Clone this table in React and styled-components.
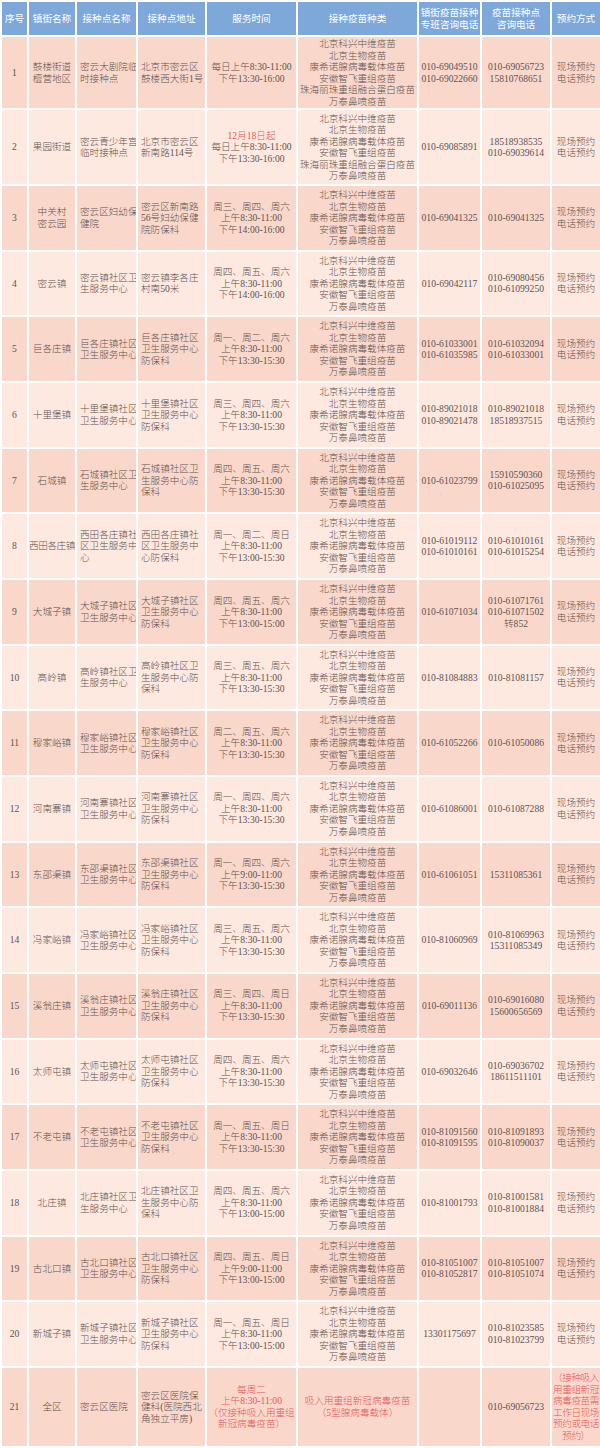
import React from 'react';
import styled, { createGlobalStyle } from 'styled-components';

const GlobalStyle = createGlobalStyle`
  html, body {
    margin: 0;
    padding: 0;
    background: #ffffff;
  }
  body {
    font-family: "Liberation Serif", "Noto Sans CJK SC", serif;
  }
`;

const Table = styled.table`
  width: 600px;
  table-layout: fixed;
  border-collapse: collapse;
  font-size: 9.6px;
  line-height: 11.5px;
  color: #5f5350;
`;

const HeadRow = styled.tr`
  height: 35px;
  background: #7ea8da;
`;

const HeadCell = styled.th`
  border: 2px solid #ffffff;
  padding: 0;
  color: #ffffff;
  font-weight: 400;
  text-align: center;
  vertical-align: middle;
`;

const Row = styled.tr`
  height: ${(props) => props.$h}px;
  background: ${(props) => (props.$odd ? '#f9d8cb' : '#fde9e0')};
`;

const Cell = styled.td`
  border: 2px solid #ffffff;
  padding: ${(props) => (props.$align === 'left' ? '1px 0 1px 3px' : '1px 0')};
  text-align: ${(props) => props.$align || 'center'};
  vertical-align: middle;
  font-weight: 300;
  white-space: nowrap;
  overflow: hidden;
  letter-spacing: ${(props) => (props.$tight ? '-0.4px' : 'normal')};
`;

const Line = styled.span`
  display: block;
  color: ${(props) => (props.$red ? '#e2585c' : 'inherit')};
`;

const widths = [27, 48, 61, 69, 91, 121, 63, 70, 50];

const heads = [
  ['序号'],
  ['镇街名称'],
  ['接种点名称'],
  ['接种点地址'],
  ['服务时间'],
  ['接种疫苗种类'],
  ['镇街疫苗接种', '专班咨询电话'],
  ['疫苗接种点', '咨询电话'],
  ['预约方式'],
];

const vac5 = ['北京科兴中维疫苗', '北京生物疫苗', '康希诺腺病毒载体疫苗', '安徽智飞重组疫苗', '万泰鼻喷疫苗'];
const vac6 = ['北京科兴中维疫苗', '北京生物疫苗', '康希诺腺病毒载体疫苗', '安徽智飞重组疫苗', '珠海丽珠重组融合蛋白疫苗', '万泰鼻喷疫苗'];
const book = ['现场预约', '电话预约'];
const red = (text) => ({ text, red: true });

const ctr = (name) => [name + '社区', '卫生服务中心'];
const ctrFull = (name) => [name + '社区', '卫生服务中心', '防保科'];
const ctr3 = (name) => [name + '社区卫', '生服务中心'];
const ctr3Full = (name) => [name + '社区卫', '生服务中心防', '保科'];
const time = (days, am, pm) => [days, '上午' + am, '下午' + pm];

const rows = [
  {
    town: ['鼓楼街道', '檀营地区'], site: ['密云大剧院临', '时接种点'], addr: ['北京市密云区', '鼓楼西大街1号'],
    time: ['每日上午8:30-11:00', '下午13:30-16:00'], vac: vac6,
    tel1: ['010-69049510', '010-69022660'], tel2: ['010-69056723', '15810768651'], book, h: 72,
  },
  {
    town: ['果园街道'], site: ['密云青少年宫', '临时接种点'], addr: ['北京市密云区', '新南路114号'],
    time: [red('12月18日起'), '每日上午8:30-11:00', '下午13:30-16:00'], vac: vac6,
    tel1: ['010-69085891'], tel2: ['18518938535', '010-69039614'], book, h: 76,
  },
  {
    town: ['中关村', '密云园'], site: ['密云区妇幼保', '健院'], addr: ['密云区新南路', '56号妇幼保健', '院防保科'],
    time: time('周三、周四、周六', '8:30-11:00', '14:00-16:00'), vac: vac5,
    tel1: ['010-69041325'], tel2: ['010-69041325'], book,
  },
  {
    town: ['密云镇'], site: ctr3('密云镇'), addr: ['密云镇李各庄', '村南50米'],
    time: time('周四、周五、周六', '8:30-11:00', '14:00-16:00'), vac: vac5,
    tel1: ['010-69042117'], tel2: ['010-69080456', '010-61099250'], book,
  },
  {
    town: ['巨各庄镇'], site: ctr('巨各庄镇'), addr: ctrFull('巨各庄镇'),
    time: time('周一、周二、周六', '8:30-11:00', '13:30-15:30'), vac: vac5,
    tel1: ['010-61033001', '010-61035985'], tel2: ['010-61032094', '010-61033001'], book,
  },
  {
    town: ['十里堡镇'], site: ctr('十里堡镇'), addr: ctrFull('十里堡镇'),
    time: time('周三、周四、周六', '8:30-11:00', '13:30-15:30'), vac: vac5,
    tel1: ['010-89021018', '010-89021478'], tel2: ['010-89021018', '18518937515'], book,
  },
  {
    town: ['石城镇'], site: ctr3('石城镇'), addr: ctr3Full('石城镇'),
    time: time('周四、周五、周六', '8:30-11:00', '13:30-15:30'), vac: vac5,
    tel1: ['010-61023799'], tel2: ['15910590360', '010-61025095'], book,
  },
  {
    town: ['西田各庄镇'], site: ['西田各庄镇社', '区卫生服务中', '心'], addr: ['西田各庄镇社', '区卫生服务中', '心防保科'],
    time: time('周一、周二、周日', '8:30-11:00', '13:00-15:30'), vac: vac5,
    tel1: ['010-61019112', '010-61010161'], tel2: ['010-61010161', '010-61015254'], book,
  },
  {
    town: ['大城子镇'], site: ctr('大城子镇'), addr: ctrFull('大城子镇'),
    time: time('周四、周五、周六', '8:30-11:00', '13:00-15:00'), vac: vac5,
    tel1: ['010-61071034'], tel2: ['010-61071761', '010-61071502', '转852'], book,
  },
  {
    town: ['高岭镇'], site: ctr3('高岭镇'), addr: ctr3Full('高岭镇'),
    time: time('周三、周五、周六', '8:30-11:00', '13:30-15:30'), vac: vac5,
    tel1: ['010-81084883'], tel2: ['010-81081157'], book,
  },
  {
    town: ['穆家峪镇'], site: ctr('穆家峪镇'), addr: ctrFull('穆家峪镇'),
    time: time('周二、周五、周六', '8:30-11:00', '13:30-15:30'), vac: vac5,
    tel1: ['010-61052266'], tel2: ['010-61050086'], book,
  },
  {
    town: ['河南寨镇'], site: ctr('河南寨镇'), addr: ctrFull('河南寨镇'),
    time: time('周一、周四、周六', '8:30-11:00', '13:30-15:30'), vac: vac5,
    tel1: ['010-61086001'], tel2: ['010-61087288'], book,
  },
  {
    town: ['东邵渠镇'], site: ctr('东邵渠镇'), addr: ctrFull('东邵渠镇'),
    time: time('周一、周四、周六', '9:00-11:00', '13:30-15:30'), vac: vac5,
    tel1: ['010-61061051'], tel2: ['15311085361'], book,
  },
  {
    town: ['冯家峪镇'], site: ctr('冯家峪镇'), addr: ctrFull('冯家峪镇'),
    time: time('周三、周五、周六', '8:30-11:00', '13:30-15:30'), vac: vac5,
    tel1: ['010-81060969'], tel2: ['010-81069963', '15311085349'], book,
  },
  {
    town: ['溪翁庄镇'], site: ctr('溪翁庄镇'), addr: ctrFull('溪翁庄镇'),
    time: time('周三、周四、周日', '8:30-11:00', '13:30-15:30'), vac: vac5,
    tel1: ['010-69011136'], tel2: ['010-69016080', '15600656569'], book,
  },
  {
    town: ['太师屯镇'], site: ctr('太师屯镇'), addr: ctrFull('太师屯镇'),
    time: time('周四、周五、周六', '8:30-11:00', '13:30-15:30'), vac: vac5,
    tel1: ['010-69032646'], tel2: ['010-69036702', '18611511101'], book,
  },
  {
    town: ['不老屯镇'], site: ctr('不老屯镇'), addr: ctrFull('不老屯镇'),
    time: time('周一、周五、周日', '8:30-11:00', '13:30-15:30'), vac: vac5,
    tel1: ['010-81091560', '010-81091595'], tel2: ['010-81091893', '010-81090037'], book,
  },
  {
    town: ['北庄镇'], site: ctr3('北庄镇'), addr: ctr3Full('北庄镇'),
    time: time('周四、周五、周六', '8:30-11:00', '13:00-15:00'), vac: vac5,
    tel1: ['010-81001793'], tel2: ['010-81001581', '010-81001884'], book,
  },
  {
    town: ['古北口镇'], site: ctr('古北口镇'), addr: ctrFull('古北口镇'),
    time: time('周四、周五、周日', '9:00-11:00', '13:00-15:00'), vac: vac5,
    tel1: ['010-81051007', '010-81052817'], tel2: ['010-81051007', '010-81051074'], book,
  },
  {
    town: ['新城子镇'], site: ctr('新城子镇'), addr: ctrFull('新城子镇'),
    time: time('周一、周五、周日', '8:30-11:00', '13:00-15:00'), vac: vac5,
    tel1: ['13301175697'], tel2: ['010-81023585', '010-81023799'], book,
  },
  {
    town: ['全区'], site: ['密云区医院'], addr: ['密云区医院保', '健科(医院西北', '角独立平房)'],
    time: [red('每周二'), red('上午8:30-11:00'), red('（仅接种吸入用重组'), red('新冠病毒疫苗）')],
    vac: [red('吸入用重组新冠病毒疫苗'), red('（5型腺病毒载体）')],
    tel1: [], tel2: ['010-69056723'],
    book: ['（接种吸入', '用重组新冠', '病毒疫苗需', '工作日现场', '预约或电话', '预约）'].map(red), h: 80,
  },
];

const Lines = ({ items }) =>
  items.map((item, i) =>
    typeof item === 'string' ? (
      <Line key={i}>{item}</Line>
    ) : (
      <Line key={i} $red={item.red}>{item.text}</Line>
    )
  );

const longest = (items) =>
  Math.max(0, ...items.map((it) => (typeof it === 'string' ? it : it.text).length));

export default function App() {
  return (
    <>
      <GlobalStyle />
      <Table>
        <colgroup>
          {widths.map((w, i) => (
            <col key={i} style={{ width: w }} />
          ))}
        </colgroup>
        <thead>
          <HeadRow>
            {heads.map((h, i) => (
              <HeadCell key={i}>
                <Lines items={h} />
              </HeadCell>
            ))}
          </HeadRow>
        </thead>
        <tbody>
          {rows.map((r, i) => (
            <Row key={i} $odd={i % 2 === 0} $h={r.h || 65.67}>
              <Cell>{i + 1}</Cell>
              <Cell $tight={longest(r.town) > 4}><Lines items={r.town} /></Cell>
              <Cell $align="left"><Lines items={r.site} /></Cell>
              <Cell $align="left"><Lines items={r.addr} /></Cell>
              <Cell><Lines items={r.time} /></Cell>
              <Cell><Lines items={r.vac} /></Cell>
              <Cell><Lines items={r.tel1} /></Cell>
              <Cell><Lines items={r.tel2} /></Cell>
              <Cell $tight={longest(r.book) > 4}><Lines items={r.book} /></Cell>
            </Row>
          ))}
        </tbody>
      </Table>
    </>
  );
}
